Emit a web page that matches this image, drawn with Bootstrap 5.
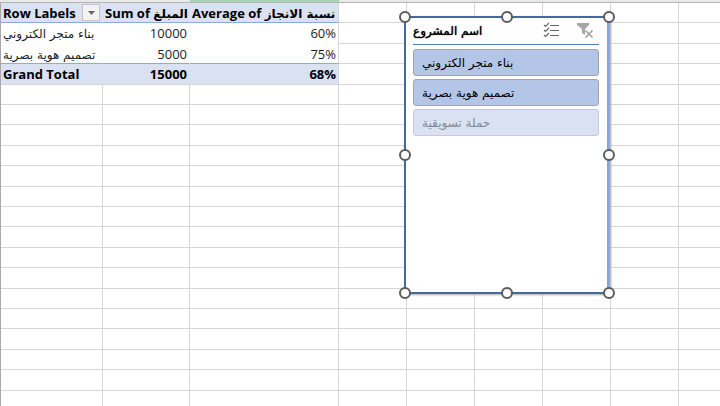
<!DOCTYPE html>
<html lang="en">
<head>
<meta charset="utf-8">
<meta name="viewport" content="width=device-width, initial-scale=1">
<title>Pivot table with slicer</title>
<link rel="stylesheet" href="https://cdn.jsdelivr.net/npm/bootstrap@5.3.0/dist/css/bootstrap.min.css">
<style>
body { font-family: "Open Sans", "DejaVu Sans", sans-serif; font-size: 13px; line-height: 18px; color: #1c1c1c; }
.sheet-head { height: 3px; background: #e9e9e9; border-bottom: 1px solid #b5b5b5; }
.sheet-head .sel { margin-left: 190px; width: 149px; height: 2px; background: #a5d6b5; }
.pivot { table-layout: fixed; width: 100%; border-collapse: separate; border-spacing: 0; border-left: 1px solid #a8a8a8; }
.pivot th, .pivot td { height: 20px; padding: 0 2px; white-space: nowrap; border-right: 1px solid #d6d6d6; border-bottom: 1px solid #d6d6d6; }
.pivot tr > :last-child { border-right: 0; }
.pivot tbody tr:nth-child(5n+1) > *, .pivot tbody tr:nth-child(5n+3) > * { height: 21px; }
.pivot .pv { border-right-color: transparent; }
.pivot .pv:nth-child(3) { border-right-color: #d6d6d6; }
.pivot .band { background: #d9e1f2; border-right-color: #d9e1f2; color: #000; }
.pivot thead .band { border-bottom-color: #8ea9db; }
.pivot .plain { border-bottom-color: transparent; }
.pivot .before-total { border-bottom-color: #8ea9db; }
.ar { font-family: "DejaVu Sans", sans-serif; font-size: 12px; line-height: 18px; }
.pivot .ar { line-height: 16px; }
.drop { width: 18px; height: 17px; background: #f3f3f3; border: 1px solid #c3c3c3; }
.slicer { left: 404px; top: 16px; width: 205px; height: 278px; background: #fff; border: 2px solid #44689f; border-right-color: #7ba5e3; box-shadow: 2px 1px 2px #aaa; padding: 0 8px 0 7px; }
.slicer-head { height: 27px; border-bottom: 1px solid #4d7ebf; color: #000; }
.slicer-title { font-weight: 400; text-shadow: 0 0 1px #000; }
.tool { width: 18px; height: 18px; }
.picks { gap: 3px; }
.pick { height: 27px; border: 1px solid #a5a5a5; border-radius: 3px; background: #b4c6e7; color: #000; padding: 0 8px; text-align: left; }
.pick.off { background: #d9e1f2; border-color: #c5cbd6; color: #858891; }
.grips { inset: -1px -2px -1px -1px; }
.grip { width: 12px; height: 12px; border: 2px solid #5b5b5b; background: #fff; }
</style>
<script src="https://cdn.jsdelivr.net/npm/bootstrap@5.3.0/dist/js/bootstrap.bundle.min.js"></script>
</head>
<body class="bg-white">
<main class="position-relative vh-100 overflow-hidden">
  <div class="sheet-head"><div class="sel"></div></div>
  <table class="pivot">
    <colgroup><col style="width:102px"><col style="width:87px"><col style="width:149px"><col style="width:68px"><col style="width:68px"><col style="width:68px"><col style="width:68px"><col style="width:68px"><col></colgroup>
    <thead>
      <tr>
        <th class="band pv"><div class="d-flex align-items-center justify-content-between">Row Labels
          <button class="drop p-0 d-flex align-items-center justify-content-center" type="button" aria-label="Filter row labels"><svg width="7" height="4" viewBox="0 0 7 4"><path d="M0 0h7L3.500 4z" fill="#666"/></svg></button></div></th>
        <th class="band pv">Sum of <bdi class="ar">المبلغ</bdi></th>
        <th class="band pv">Average of <bdi class="ar">نسبة الانجاز</bdi></th>
        <td></td><td></td><td></td><td></td><td></td><td></td>
      </tr>
    </thead>
    <tbody id="rows">
      <tr><td class="pv plain"><bdi class="ar">بناء متجر الكتروني</bdi></td><td class="pv plain text-end">10000</td><td class="pv plain text-end">60%</td><td></td><td></td><td></td><td></td><td></td><td></td></tr>
      <tr><td class="pv before-total"><bdi class="ar">تصميم هوية بصرية</bdi></td><td class="pv before-total text-end">5000</td><td class="pv before-total text-end">75%</td><td></td><td></td><td></td><td></td><td></td><td></td></tr>
      <tr><th class="band pv">Grand Total</th><th class="band pv text-end">15000</th><th class="band pv text-end">68%</th><td></td><td></td><td></td><td></td><td></td><td></td></tr>
    </tbody>
  </table>

  <section class="slicer position-absolute" aria-label="Slicer">
    <div class="slicer-head d-flex align-items-center">
      <strong class="ar slicer-title me-auto" dir="rtl">اسم المشروع</strong>
      <button class="tool btn p-0 border-0 d-flex" type="button" aria-label="Multi-select"><svg width="18" height="18" viewBox="0 0 18 18" fill="none" stroke="#666"><path d="M7 3.500h9M7 8.500h9M7 13.500h9"/><path d="M1 3l1.500 1.500L6 1M1 8l1.500 1.500L6 6M1 13l1.500 1.500L6 11" stroke-width="1.200"/></svg></button>
      <button class="tool btn p-0 border-0 d-flex ms-3 me-1" type="button" aria-label="Clear filter"><svg width="18" height="18" viewBox="0 0 18 18"><path d="M0 1h12v2L8 7v6l-3-2V7L0 3z" fill="#a6a6a6"/><path d="M8.500 8.500l7 7M15.500 8.500l-7 7" stroke="#a0a0a0" stroke-width="1.600"/></svg></button>
    </div>
    <div class="picks d-grid mt-1">
      <button class="pick ar" type="button" aria-pressed="true"><bdi>بناء متجر الكتروني</bdi></button>
      <button class="pick ar" type="button" aria-pressed="true"><bdi>تصميم هوية بصرية</bdi></button>
      <button class="pick ar off" type="button" aria-pressed="false"><bdi>حملة تسويقية</bdi></button>
    </div>
    <div class="grips position-absolute pe-none">
      <span class="grip rounded-circle position-absolute top-0 start-0 translate-middle"></span>
      <span class="grip rounded-circle position-absolute top-0 start-50 translate-middle"></span>
      <span class="grip rounded-circle position-absolute top-0 start-100 translate-middle"></span>
      <span class="grip rounded-circle position-absolute top-50 start-0 translate-middle"></span>
      <span class="grip rounded-circle position-absolute top-50 start-100 translate-middle"></span>
      <span class="grip rounded-circle position-absolute top-100 start-0 translate-middle"></span>
      <span class="grip rounded-circle position-absolute top-100 start-50 translate-middle"></span>
      <span class="grip rounded-circle position-absolute top-100 start-100 translate-middle"></span>
    </div>
  </section>
</main>
<script>
// Fill the sheet below the pivot with empty rows
const rows = document.getElementById('rows');
for (let i = 0; i < 60; i++) {
  const tr = rows.insertRow();
  for (let c = 0; c < 9; c++) tr.insertCell();
}
</script>
</body>
</html>
